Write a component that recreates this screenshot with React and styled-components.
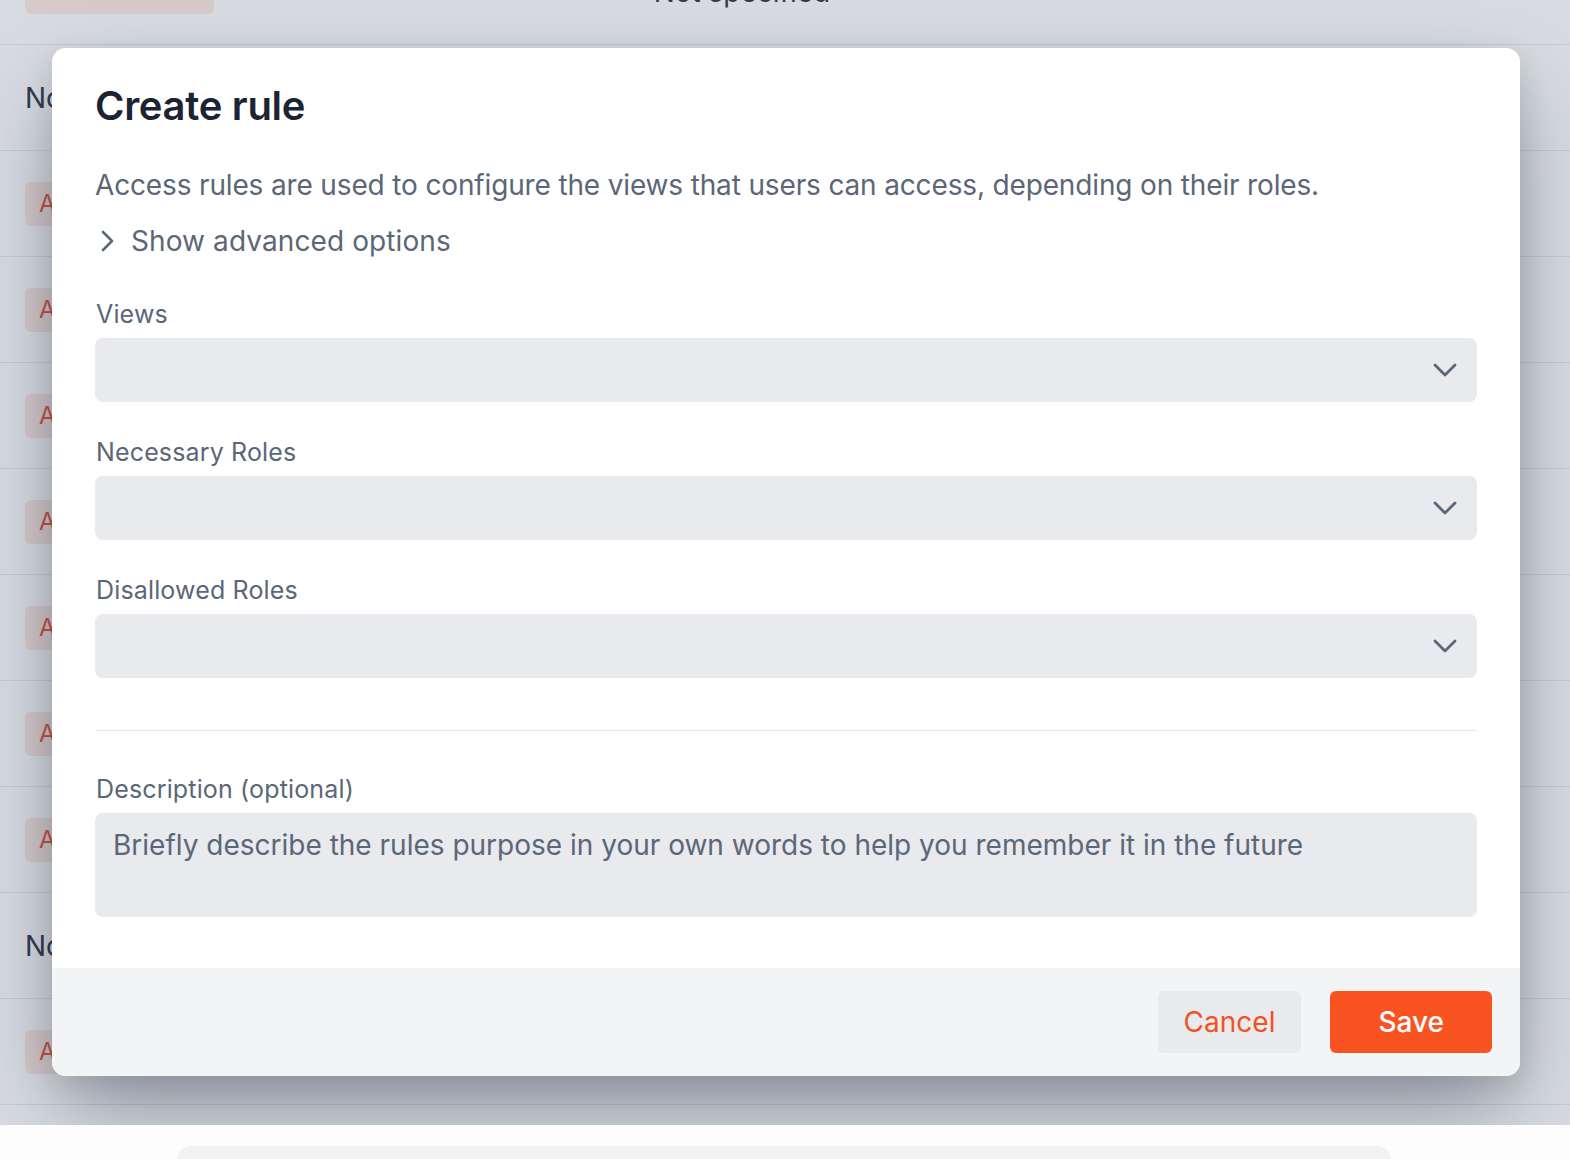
import React from 'react'
import styled, { createGlobalStyle } from 'styled-components'

const GlobalStyle = createGlobalStyle`
  body {
    margin: 0;
    background: #fdfdfd;
    font-family: Inter, "Noto Sans", sans-serif;
    overflow: hidden;
  }
`

const Screen = styled.div`
  position: relative;
  height: 1125px;
  overflow: hidden;
  background: #ffffff;
`

const Table = styled.div`
  margin-top: -61px;
`

const Row = styled.div`
  height: 106px;
  box-sizing: border-box;
  border-bottom: 1px solid #e2e8f0;
  display: flex;
  align-items: center;
  padding: 0 25px;
  gap: 440px;
`

const Badge = styled.span`
  display: inline-flex;
  align-items: center;
  height: 44px;
  padding: 0 14px;
  border-radius: 6px;
  background: #fde7e1;
  color: #e8472a;
  font-size: 24px;
  letter-spacing: 0;
`

const Cell = styled.span`
  font-size: 28px;
  color: #1e293b;
`

const Overlay = styled.div`
  position: absolute;
  inset: 0;
  background: rgba(100, 116, 139, 0.25);
`

const Modal = styled.div`
  position: absolute;
  left: 52px;
  top: 48px;
  width: 1468px;
  background: #ffffff;
  border-radius: 14px;
  overflow: hidden;
  box-shadow: 0 40px 90px -10px rgba(15, 23, 42, 0.38), 0 10px 30px rgba(15, 23, 42, 0.12);
`

const Body = styled.div`
  padding: 30px 43px 51px 43px;
  display: flex;
  flex-direction: column;
`

const Title = styled.h2`
  margin: 0;
  font-size: 40px;
  line-height: 56px;
  font-weight: 600;
  color: #1a2433;
  letter-spacing: -0.3px;
`

const Lead = styled.p`
  margin: 31px 0 0 0;
  font-size: 28px;
  line-height: 40px;
  color: #5b6778;
  letter-spacing: -0.15px;
`

const Advanced = styled.button`
  display: flex;
  align-items: center;
  gap: 17px;
  margin-top: 16px;
  padding: 0 0 0 5px;
  border: none;
  background: none;
  font-family: inherit;
  font-size: 28px;
  line-height: 40px;
  color: #5b6778;
  letter-spacing: 0.1px;
  cursor: pointer;
`

const Field = styled.div`
  display: flex;
  flex-direction: column;
  gap: 9px;
  margin-top: ${p => p.top || 0}px;
`

const Label = styled.label`
  font-size: 25px;
  line-height: 30px;
  color: #5b6778;
  padding-left: 1px;
  letter-spacing: 0.15px;
`

const Select = styled.div`
  height: 64px;
  border-radius: 8px;
  background: #e8eaee;
  display: flex;
  align-items: center;
  justify-content: flex-end;
  padding: 0 20px;
`

const TextArea = styled.div`
  height: 104px;
  box-sizing: border-box;
  border-radius: 8px;
  background: #e8eaee;
  padding: 12px 18px;
  font-size: 28px;
  line-height: 40px;
  color: #5b6778;
  letter-spacing: 0;
`

const Divider = styled.hr`
  margin: 52px 0 0 0;
  border: none;
  border-top: 1px solid #e5e7eb;
`

const Footer = styled.div`
  background: #f3f4f6;
  padding: 23px 28px;
  display: flex;
  justify-content: flex-end;
  gap: 29px;
`

const Button = styled.button`
  height: 62px;
  border: none;
  border-radius: 6px;
  padding: 0 ${p => p.primary ? 48 : 26}px;
  background: ${p => p.primary ? '#f95322' : '#e8eaee'};
  color: ${p => p.primary ? '#ffffff' : '#f4511e'};
  font-family: inherit;
  font-size: 28px;
  font-weight: ${p => p.primary ? 500 : 400};
  cursor: pointer;
`

const Below = styled.div`
  box-sizing: border-box;
  padding: 21px 179px 0 177px;
  height: 34px;
  overflow: hidden;
`

const BelowCard = styled.div`
  height: 60px;
  border-radius: 14px;
  background: #f2f2f2;
`

const ChevronDown = () => (
  <svg width="24" height="14" viewBox="0 0 24 14" fill="none" stroke="#5b6778"
    strokeWidth="2.8" strokeLinecap="round" strokeLinejoin="round">
    <path d="M2 2l10 10 10-10" />
  </svg>
)

const ChevronRight = () => (
  <svg width="14" height="22" viewBox="0 0 14 22" fill="none" stroke="#5b6778"
    strokeWidth="2.6" strokeLinecap="round" strokeLinejoin="round">
    <path d="M3 2l9 9-9 9" />
  </svg>
)

const rows = [
  { badge: 'ANONYMOUS', other: 'Not specified' },
  { text: 'Not specified' },
  { badge: 'ADMIN' },
  { badge: 'ADMIN' },
  { badge: 'ADMIN' },
  { badge: 'ADMIN' },
  { badge: 'ADMIN' },
  { badge: 'ADMIN' },
  { badge: 'ADMIN' },
  { text: 'Not specified' },
  { badge: 'ADMIN' },
  { text: 'Not specified' },
]

export default function App() {
  return (
    <>
      <GlobalStyle />
      <Screen>
        <Table>
          {rows.map((r, i) => (
            <Row key={i}>
              {r.badge ? <Badge>{r.badge}</Badge> : <Cell>{r.text}</Cell>}
              {r.other && <Cell>{r.other}</Cell>}
            </Row>
          ))}
        </Table>
        <Overlay />
        <Modal>
          <Body>
            <Title>Create rule</Title>
            <Lead>Access rules are used to configure the views that users can access, depending on their roles.</Lead>
            <Advanced>
              <ChevronRight />
              Show advanced options
            </Advanced>
            <Field top={38}>
              <Label>Views</Label>
              <Select><ChevronDown /></Select>
            </Field>
            <Field top={35}>
              <Label>Necessary Roles</Label>
              <Select><ChevronDown /></Select>
            </Field>
            <Field top={35}>
              <Label>Disallowed Roles</Label>
              <Select><ChevronDown /></Select>
            </Field>
            <Divider />
            <Field top={43}>
              <Label>Description (optional)</Label>
              <TextArea>Briefly describe the rules purpose in your own words to help you remember it in the future</TextArea>
            </Field>
          </Body>
          <Footer>
            <Button>Cancel</Button>
            <Button primary>Save</Button>
          </Footer>
        </Modal>
      </Screen>
      <Below>
        <BelowCard />
      </Below>
    </>
  )
}
